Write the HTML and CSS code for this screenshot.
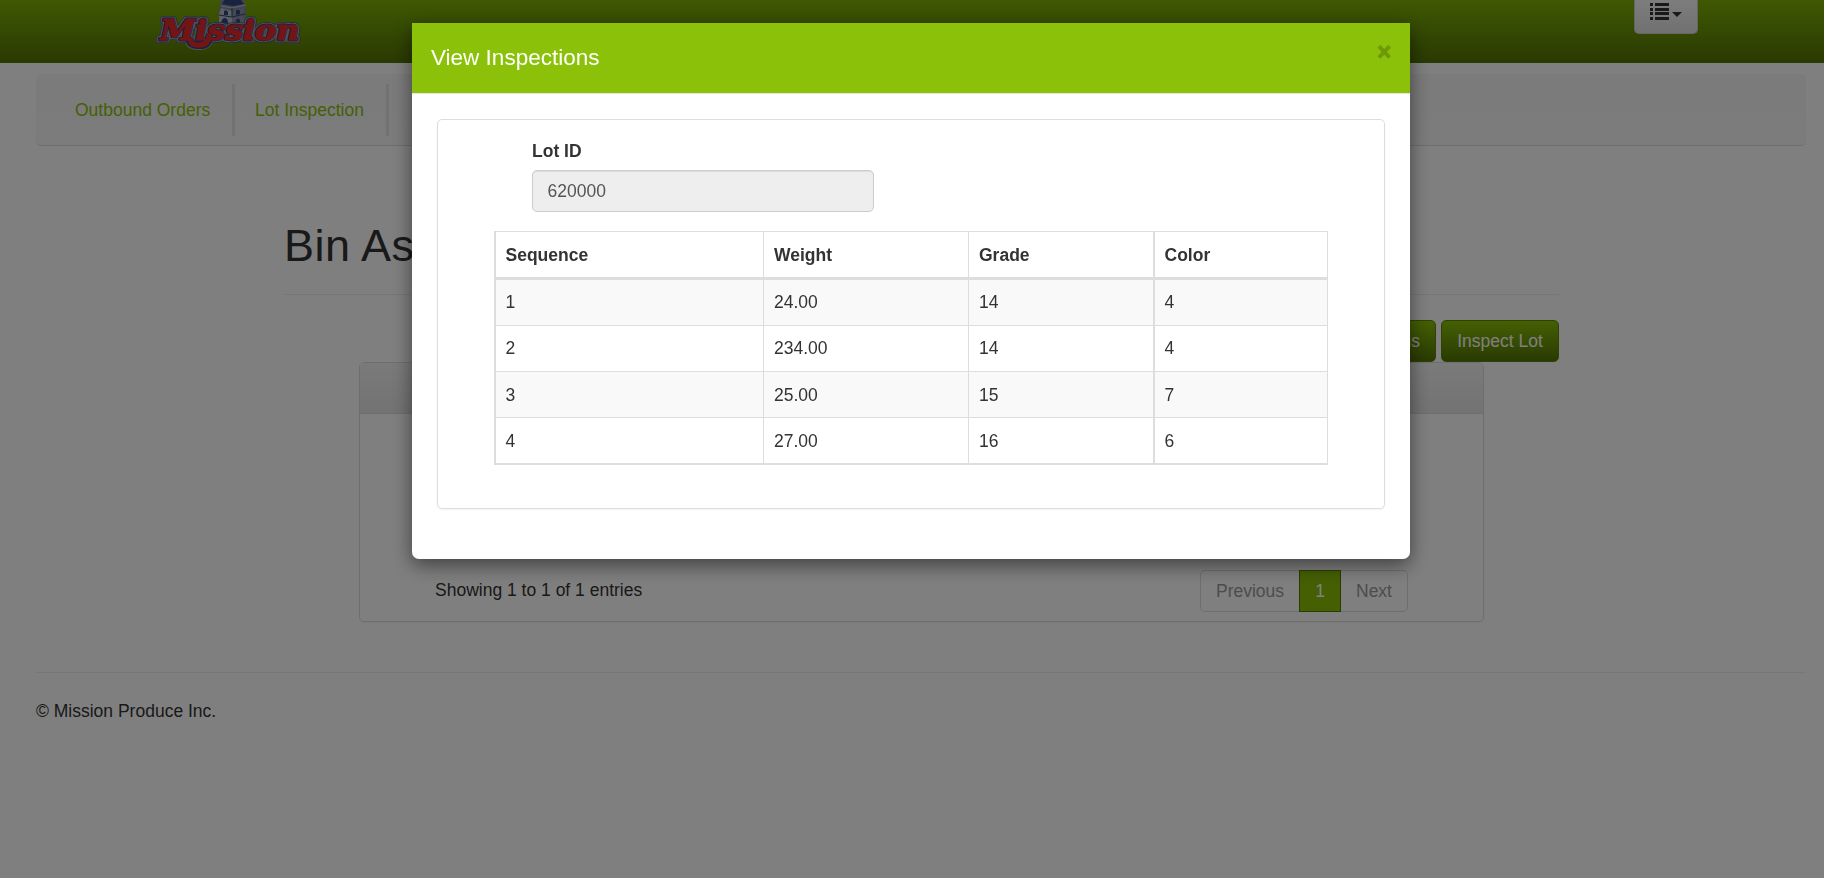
FILE: index.html
```html
<!DOCTYPE html>
<html lang="en">
<head>
<meta charset="utf-8">
<title>View Inspections</title>
<link rel="stylesheet" href="styles.css">
</head>
<body>
<header class="topbar">
  <svg class="logo" width="150" height="60" viewBox="0 0 150 60" aria-label="Mission">
    <g>
      <path fill="#7d88a0" d="M69 0H91L94 5L93 27H67V7Z"/>
      <path fill="#b9bec8" d="M69 8L80 11V27H67V14Z"/>
      <path fill="#8a93a6" d="M80 11L92 8V27H80Z"/>
      <path fill="#33447f" d="M70 4L73-1H88L92 4L81 6Z"/>
      <path fill="none" stroke="#c2c7cf" stroke-width="1" d="M69 6L80 8L94 5"/>
      <path fill="none" stroke="#33447f" stroke-width="1" d="M67 15L80 17L93 14M80 8V17"/>
      <path fill="#33447f" d="M72 15V11Q74 9 76 12V15ZM84 15V11Q86 8 88 11V14ZM69 23Q70 18 73 18Q76 18 76 24ZM84 25V20Q86 17 88 20V25Z"/>
    </g>
    <path class="swash-edge" d="M57 37Q56 46 46 45Q39 45 38 41"/>
    <text class="word word-blue" x="8" y="39.500" textLength="139" lengthAdjust="spacingAndGlyphs">Mission</text>
    <text class="word word-grey" x="8" y="39.500" textLength="139" lengthAdjust="spacingAndGlyphs">Mission</text>
    <text class="word word-navy" x="8" y="39.500" textLength="139" lengthAdjust="spacingAndGlyphs">Mission</text>
    <path class="swash-navy" d="M57 37Q56 46 46 45Q39 45 38 41"/>
    <path class="swash" d="M57 36Q56 46 46 45Q40 45 39 42"/>
    <text class="word word-red" x="8" y="39.500" textLength="139" lengthAdjust="spacingAndGlyphs">Mission</text>
  </svg>
  <button class="menu-btn" aria-label="Menu">
    <svg width="34" height="20" viewBox="0 0 34 20" fill="#333">
      <path d="M0 3h3v3H0zM5 3h14v3H5zM0 8h3v3H0zM5 8h14v3H5zM0 12h3v3H0zM5 12h14v3H5zM0 17h3v3H0zM5 17h14v3H5z"/>
      <path d="M22 12h10l-5 5z"/>
    </svg>
  </button>
</header>
<nav class="nav">
  <a class="nav-link">Outbound Orders</a>
  <a class="nav-link">Lot Inspection</a>
</nav>
<main class="main">
  <h1 class="title">Bin As</h1>
  <div class="actions">
    <button class="btn">View Inspections</button>
    <button class="btn btn-inspect">Inspect Lot</button>
  </div>
  <section class="panel">
    <div class="panel-head"></div>
    <div class="panel-foot">
      <span class="info">Showing 1 to 1 of 1 entries</span>
      <div class="pager"><span class="page prev">Previous</span><span class="page current">1</span><span class="page next">Next</span></div>
    </div>
  </section>
</main>
<footer class="footer">© Mission Produce Inc.</footer>

<div class="backdrop">
  <div class="modal">
    <div class="modal-head"><h4 class="modal-title">View Inspections</h4><span class="close">×</span></div>
    <div class="modal-body">
      <div class="card">
        <div class="field">
          <label class="label" for="lot">Lot ID</label>
          <input class="input" id="lot" value="620000" readonly>
        </div>
        <table class="grid">
          <colgroup><col class="c1"><col class="c2"><col class="c3"><col class="c4"></colgroup>
          <thead><tr><th>Sequence</th><th>Weight</th><th>Grade</th><th>Color</th></tr></thead>
          <tbody>
            <tr><td>1</td><td>24.00</td><td>14</td><td>4</td></tr>
            <tr><td>2</td><td>234.00</td><td>14</td><td>4</td></tr>
            <tr><td>3</td><td>25.00</td><td>15</td><td>7</td></tr>
            <tr><td>4</td><td>27.00</td><td>16</td><td>6</td></tr>
          </tbody>
        </table>
      </div>
    </div>
  </div>
</div>
</body>
</html>
```
FILE: styles.css
```css
* { box-sizing: border-box; }
body {
  margin: 0;
  height: 878px;
  overflow: hidden;
  background: #fff;
  color: #333;
  font: 17.5px/25px "Liberation Sans", Arial, sans-serif;
}
button, input { font: inherit; }

.topbar {
  display: flex;
  justify-content: space-between;
  align-items: flex-start;
  height: 63px;
  padding: 0 126px 0 152px;
  background: linear-gradient(#7fb106, #537404);
}
.logo { display: block; overflow: visible; }
.word {
  font: italic bold 28px "DejaVu Serif", serif;
  stroke-linejoin: round;
}
.word-blue { fill: #33447f; stroke: #46557a; stroke-width: 6; }
.word-grey { fill: #a9afb8; stroke: #a9afb8; stroke-width: 4.6; }
.word-navy { fill: #33447f; stroke: #33447f; stroke-width: 2.8; }
.word-red { fill: #e42a2a; stroke: #e42a2a; stroke-width: 1.1; }
.swash-edge { fill: none; stroke: #a0a8b4; stroke-width: 10; stroke-linecap: round; }
.swash-navy { fill: none; stroke: #33447f; stroke-width: 8; stroke-linecap: round; }
.swash { fill: none; stroke: #e42a2a; stroke-width: 5.5; stroke-linecap: round; }
.menu-btn {
  width: 64px;
  height: 34px;
  padding: 0 0 0 15px;
  display: flex;
  align-items: flex-start;
  border: 1px solid #ccc;
  border-top: 0;
  border-radius: 0 0 5px 5px;
  background: linear-gradient(#fafafa, #e2e2e2);
}

.nav {
  display: flex;
  height: 72px;
  margin: 11px 18px 0 36px;
  padding: 10px 0 0 19px;
  border-bottom: 1px solid #dcdcdc;
  border-radius: 5px;
  background: linear-gradient(#f6f6f6, #f8f8f8);
}
.nav-link {
  height: 52px;
  padding: 14px 0 0 20px;
  border-right: 3px solid #e4e4e4;
  color: #8ac007;
  white-space: nowrap;
}
.nav-link:first-child { width: 180px; }
.nav-link:last-child { width: 154px; }

.main { width: 1275px; margin: 78px 0 0 284px; }
.title {
  margin: 0;
  height: 71px;
  font-size: 45px;
  font-weight: 400;
  line-height: 44px;
  letter-spacing: .5px;
  border-bottom: 1px solid #eee;
}
.actions {
  display: flex;
  justify-content: flex-end;
  gap: 5px;
  margin-top: 25px;
}
.btn {
  height: 42px;
  padding: 0 15px;
  border: 1px solid #5f8505;
  border-radius: 5px;
  background: linear-gradient(#8ac007, #537404);
  color: #fff;
}
.btn-inspect { width: 118px; }
.panel {
  display: flex;
  flex-direction: column;
  justify-content: space-between;
  width: 1125px;
  height: 260px;
  margin-left: 75px;
  border: 1px solid #ddd;
  border-radius: 5px;
  box-shadow: 0 1px 2px rgba(0, 0, 0, .05);
}
.panel-head {
  height: 51px;
  border-bottom: 1px solid #ddd;
  background: linear-gradient(#f5f5f5, #e6e6e6);
}
.panel-foot {
  display: flex;
  justify-content: space-between;
  padding: 0 75px 9px;
}
.info { padding-top: 8px; }
.pager { display: flex; height: 42px; color: #999; }
.page { border: 1px solid #ddd; text-align: center; line-height: 40px; }
.prev { width: 99px; border-right: 0; border-radius: 5px 0 0 5px; }
.current { width: 42px; border-color: #567804; background: #8ac007; color: #fff; }
.next { width: 67px; border-left: 0; border-radius: 0 5px 5px 0; }

.footer {
  margin: 50px 18px 0 36px;
  padding-top: 26px;
  border-top: 1px solid #eee;
}

.backdrop {
  position: fixed;
  inset: 0;
  background: rgba(0, 0, 0, .5);
}
.modal {
  width: 998px;
  height: 536px;
  margin: 23px 0 0 412px;
  border-radius: 0 0 7px 7px;
  background: #fff;
  box-shadow: 0 6px 19px rgba(0, 0, 0, .5);
}
.modal-head {
  display: flex;
  justify-content: space-between;
  height: 71px;
  padding: 19px 19px 0;
  border-bottom: 1px solid #e5e5e5;
  background: #8bc109;
}
.modal-title { margin: 0; font-size: 22.5px; font-weight: 400; line-height: 32px; color: #fff; }
.close {
  font-size: 23px;
  font-weight: 700;
  line-height: 20px;
  color: #000;
  opacity: .2;
  text-shadow: 0 1px 0 #fff;
  -webkit-text-stroke: 1.5px #000;
}
.modal-body { padding: 25px; }
.card {
  height: 390px;
  padding: 19px 56px 0;
  border: 1px solid #ddd;
  border-radius: 5px;
  box-shadow: 0 1px 2px rgba(0, 0, 0, .05);
}
.field { width: 342px; margin-left: 38px; }
.label { display: block; margin-bottom: 6px; font-weight: 700; }
.input {
  display: block;
  width: 342px;
  height: 42px;
  padding: 0 14.5px;
  border: 1px solid #ccc;
  border-radius: 5px;
  background: #eee;
  color: #555;
  box-shadow: inset 0 1px 1px rgba(0, 0, 0, .075);
}
.grid {
  width: 834px;
  margin-top: 19px;
  table-layout: fixed;
  border-spacing: 0;
  text-align: left;
}
.c1 { width: 269px; }
.c2 { width: 205px; }
.c3 { width: 185px; }
.c4 { width: 175px; }
.grid th, .grid td {
  padding: 10px;
  border: 0 solid #ddd;
  border-width: 1px 0 0 1px;
}
.grid th { padding: 11px 10px 9px; border-bottom-width: 3px; }
.grid th:first-child, .grid td:first-child { border-left-width: 2px; padding-left: 9.5px; }
.grid th:last-child, .grid td:last-child { border-left-width: 2px; border-right-width: 1px; padding-left: 9.5px; }
.grid tbody tr:first-child td { border-top-width: 0; }
.grid tbody tr:last-child td { border-bottom-width: 2px; }
.grid tbody tr:nth-child(n+3) td { padding-top: 11px; padding-bottom: 9px; }
.grid tbody tr:nth-child(odd) { background: #f9f9f9; }
```
